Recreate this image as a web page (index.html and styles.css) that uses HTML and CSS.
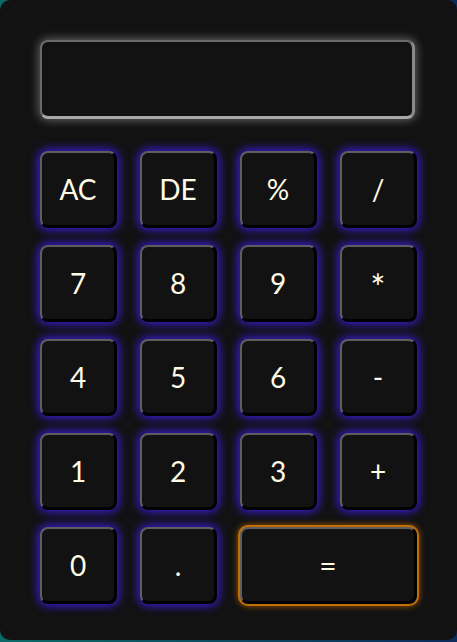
FILE: index.html
```html
<!DOCTYPE html>
<html>
<head>
<meta charset="utf-8">
<link rel="stylesheet" href="styles.css">
</head>
<body>
<div class="calc">
  <div class="display"></div>
  <div class="keys">
    <button class="key">AC</button>
    <button class="key">DE</button>
    <button class="key">%</button>
    <button class="key">/</button>
    <button class="key">7</button>
    <button class="key">8</button>
    <button class="key">9</button>
    <button class="key star">*</button>
    <button class="key">4</button>
    <button class="key">5</button>
    <button class="key">6</button>
    <button class="key">-</button>
    <button class="key">1</button>
    <button class="key">2</button>
    <button class="key">3</button>
    <button class="key">+</button>
    <button class="key">0</button>
    <button class="key">.</button>
    <button class="key equal">=</button>
  </div>
</div>
</body>
</html>
```
FILE: styles.css
```css
html, body {
  margin: 0;
  padding: 0;
}
body {
  width: 457px;
  height: 642px;
  background: linear-gradient(to right, #0c6a66, #0d2a5a);
  overflow: hidden;
}
.calc {
  box-sizing: border-box;
  width: 457px;
  height: 640px;
  background: #121212;
  border-radius: 10px;
  padding: 40px 40px 0 40px;
}
.display {
  box-sizing: border-box;
  width: 375px;
  height: 79px;
  border: 2px solid #6a6a6a;
  border-bottom: 3px solid #a8a8a8;
  border-right: 3px solid #8a8a8a;
  border-radius: 8px;
  background: #121212;
  box-shadow: 0 0 8px 2px rgba(255, 255, 255, 0.3);
  margin-bottom: 32px;
}
.keys {
  display: grid;
  grid-template-columns: repeat(4, 77px);
  grid-auto-rows: 77px;
  column-gap: 23px;
  row-gap: 17px;
}
.key {
  box-sizing: border-box;
  margin: 0;
  padding: 0;
  background: #121212;
  border-top: 2px solid #5e5e5e;
  border-left: 2px solid #5e5e5e;
  border-right: 3px solid #000;
  border-bottom: 3px solid #000;
  border-radius: 8px;
  box-shadow: 0 0 10px 2px rgba(60, 28, 230, 0.95);
  color: #fffbe6;
  font-family: "Lato", "Open Sans", sans-serif;
  font-size: 28px;
  line-height: 1;
  display: flex;
  align-items: center;
  justify-content: center;
}
.star {
  font-size: 36px;
  padding-top: 8px;
}
.equal {
  grid-column: span 2;
  font-size: 30px;
  box-shadow: 0 0 0 2px #c06f08, 0 0 6px 2px #a05a05;
}
```
